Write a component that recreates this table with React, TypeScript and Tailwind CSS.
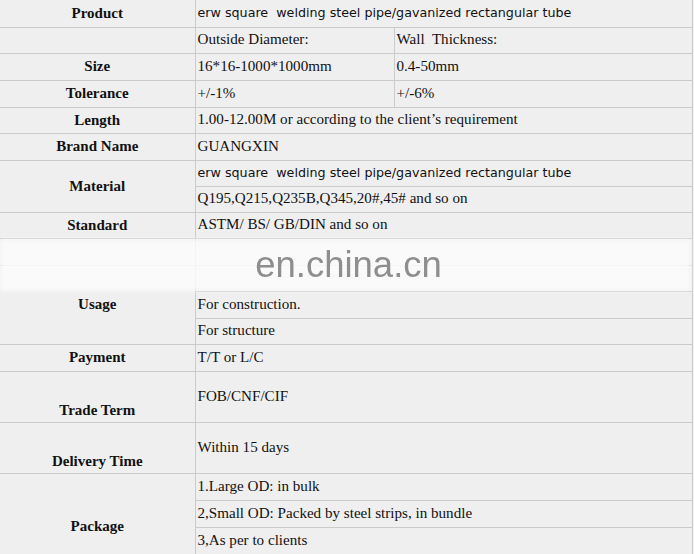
const serif = "font-['Liberation_Serif',serif]"
const sans = "font-['DejaVu_Sans',sans-serif]"

function Label({ children, rowSpan, bottom }: { children?: React.ReactNode; rowSpan?: number; bottom?: boolean }) {
  return (
    <td
      rowSpan={rowSpan}
      className={`border-b border-r border-[#cbcbcb] text-center text-[15px] font-bold ${serif} ${bottom ? 'align-bottom pb-[4px]' : 'align-middle'}`}
    >
      {children}
    </td>
  )
}

function Cell({ children, colSpan, s }: { children?: React.ReactNode; colSpan?: number; s?: boolean }) {
  return (
    <td
      colSpan={colSpan}
      className={`border-b border-r border-[#cbcbcb] pl-[2px] align-middle whitespace-pre ${s ? `${sans} text-[12.7px]` : `${serif} text-[15.1px]`}`}
    >
      {children}
    </td>
  )
}

const product = 'erw square  welding steel pipe/gavanized rectangular tube'

export default function App() {
  return (
    <div className="relative h-[554px] w-[694px] overflow-hidden bg-[#f0efef] text-[#111]">
      <table className="w-[692px] table-fixed border-collapse leading-none">
        <colgroup>
          <col className="w-[195px]" />
          <col className="w-[199px]" />
          <col className="w-[298px]" />
        </colgroup>
        <tbody>
          <tr className="h-[27px]">
            <Label>Product</Label>
            <Cell colSpan={2} s>{product}</Cell>
          </tr>
          <tr className="h-[26px]">
            <Label />
            <Cell>Outside Diameter:</Cell>
            <Cell>Wall  Thickness:</Cell>
          </tr>
          <tr className="h-[27px]">
            <Label>Size</Label>
            <Cell>16*16-1000*1000mm</Cell>
            <Cell>0.4-50mm</Cell>
          </tr>
          <tr className="h-[27px]">
            <Label>Tolerance</Label>
            <Cell>+/-1%</Cell>
            <Cell>+/-6%</Cell>
          </tr>
          <tr className="h-[26px]">
            <Label>Length</Label>
            <Cell colSpan={2}>1.00-12.00M or according to the client’s requirement</Cell>
          </tr>
          <tr className="h-[27px]">
            <Label>Brand Name</Label>
            <Cell colSpan={2}>GUANGXIN</Cell>
          </tr>
          <tr className="h-[26px]">
            <Label rowSpan={2}>Material</Label>
            <Cell colSpan={2} s>{product}</Cell>
          </tr>
          <tr className="h-[26px]">
            <Cell colSpan={2}>Q195,Q215,Q235B,Q345,20#,45# and so on</Cell>
          </tr>
          <tr className="h-[26px]">
            <Label>Standard</Label>
            <Cell colSpan={2}>ASTM/ BS/ GB/DIN and so on</Cell>
          </tr>
          <tr className="h-[27px]">
            <Label />
            <Cell colSpan={2} />
          </tr>
          <tr className="h-[26px]">
            <Label rowSpan={3}>Usage</Label>
            <Cell colSpan={2} />
          </tr>
          <tr className="h-[27px]">
            <Cell colSpan={2}>For construction.</Cell>
          </tr>
          <tr className="h-[26px]">
            <Cell colSpan={2}>For structure</Cell>
          </tr>
          <tr className="h-[27px]">
            <Label>Payment</Label>
            <Cell colSpan={2}>T/T or L/C</Cell>
          </tr>
          <tr className="h-[51px]">
            <Label bottom>Trade Term</Label>
            <Cell colSpan={2}>FOB/CNF/CIF</Cell>
          </tr>
          <tr className="h-[51px]">
            <Label bottom>Delivery Time</Label>
            <Cell colSpan={2}>Within 15 days</Cell>
          </tr>
          <tr className="h-[27px]">
            <Label rowSpan={4}>Package</Label>
            <Cell colSpan={2}>1.Large OD: in bulk</Cell>
          </tr>
          <tr className="h-[27px]">
            <Cell colSpan={2}>2,Small OD: Packed by steel strips, in bundle</Cell>
          </tr>
          <tr className="h-[27px]">
            <Cell colSpan={2}>3,As per to clients</Cell>
          </tr>
          <tr className="h-[26px]">
            <Cell colSpan={2} />
          </tr>
        </tbody>
      </table>

      {/* watermark band */}
      <div className="absolute left-0 top-[239px] h-[52px] w-[691px] bg-[#fbfbfb]/85 blur-[2px]" />
      <div className="absolute left-0 top-[239px] flex h-[52px] w-[691px] items-center justify-center">
        <span className="ml-[6px] font-['Liberation_Sans',sans-serif] text-[36.5px] leading-none text-[#8e8e8e] blur-[0.4px]">
          en.china.cn
        </span>
      </div>
    </div>
  )
}
